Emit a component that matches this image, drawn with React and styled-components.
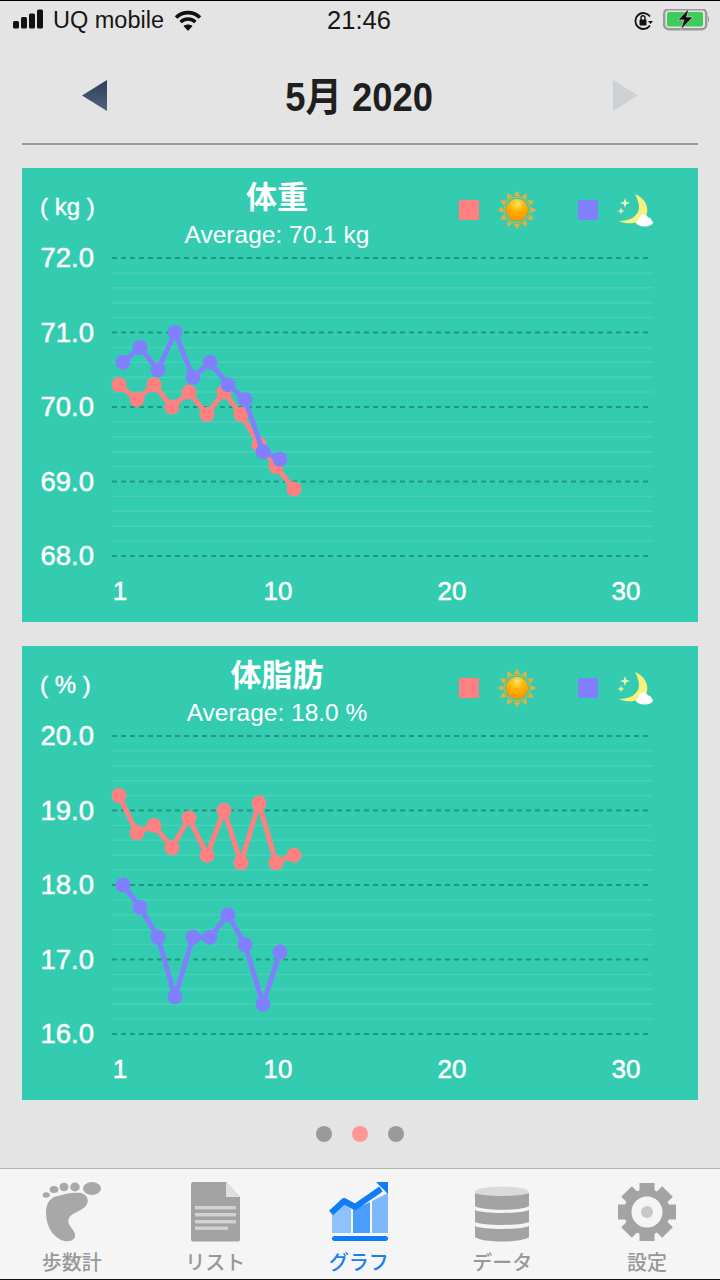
import styled, { createGlobalStyle } from "styled-components";

const GlobalStyle = createGlobalStyle`
  html, body {
    margin: 0;
    padding: 0;
    background: #e4e4e4;
    font-family: "Liberation Sans", "Noto Sans CJK JP", sans-serif;
  }
`;

const Page = styled.div`
  width: 720px;
  height: 1280px;
  display: flex;
  flex-direction: column;
  overflow: hidden;
  background: #e4e4e4;
  border-top: 1px solid #000;
  box-sizing: border-box;
`;

const StatusBar = styled.div`
  height: 39px;
  flex: none;
  display: grid;
  grid-template-columns: 1fr auto 1fr;
  align-items: center;
  padding: 0 10px 0 13px;
  color: #161616;
`;

const StatusLeft = styled.div`
  display: flex;
  align-items: center;
`;

const StatusRight = styled.div`
  display: flex;
  align-items: center;
  justify-content: flex-end;
  gap: 9px;
`;

const Carrier = styled.span`
  font-size: 23.5px;
  margin: 0 10px;
`;

const Clock = styled.span`
  font-size: 25.5px;
  margin-left: -5px;
`;

const MonthNav = styled.div`
  height: 103px;
  flex: none;
  margin: 0 22px;
  padding: 0 60px;
  display: flex;
  align-items: center;
  justify-content: space-between;
  border-bottom: 2px solid #9c9c9c;
`;

const Arrow = styled.div`
  width: 25px;
  height: 31px;
  margin-top: 8px;
  background: ${(p) => (p.$disabled ? "#ced1d4" : "linear-gradient(#2b3f58, #50657c)")};
  clip-path: ${(p) =>
    p.$right ? "polygon(0 0, 100% 50%, 0 100%)" : "polygon(100% 0, 0 50%, 100% 100%)"};
`;

const MonthTitle = styled.div`
  font-size: 40px;
  font-weight: 700;
  color: #1f1f1f;
  margin-top: 4px;
  transform: translateX(-1px) scaleX(0.91);
  white-space: nowrap;
`;

const Cards = styled.main`
  flex: 1;
  display: flex;
  flex-direction: column;
  gap: 24px;
  padding: 23px 22px 0;
`;

const Card = styled.section`
  height: 454px;
  background: #33ccb0;
  color: #fff;
  display: flex;
  flex-direction: column;
`;

const CardHeader = styled.header`
  height: 70px;
  flex: none;
  display: grid;
  grid-template-columns: 90px 330px 1fr;
`;

const Unit = styled.div`
  font-size: 24px;
  line-height: 26px;
  padding: 26px 0 0 18px;
  white-space: pre;
  -webkit-text-stroke: 0.4px #fff;
`;

const TitleBlock = styled.div`
  display: flex;
  flex-direction: column;
  align-items: center;
`;

const CardTitle = styled.div`
  font-size: 31px;
  line-height: 38px;
  margin-top: 8px;
  font-weight: 700;
  font-family: "Noto Sans CJK JP", sans-serif;
`;

const Average = styled.div`
  font-size: 24.5px;
  line-height: 26px;
  margin-top: 8px;
`;

const Legend = styled.div`
  display: flex;
  align-items: center;
  height: 38px;
  margin-top: 23px;
  padding-left: 17px;
`;

const Swatch = styled.span`
  width: 20px;
  height: 20px;
  flex: none;
  background: ${(p) => p.$color};
  margin-left: ${(p) => p.$before}px;
  margin-right: ${(p) => p.$after}px;
`;

const Plot = styled.svg`
  display: block;
  flex: none;
  font-family: "Liberation Sans", sans-serif;
  font-size: 26px;
  fill: #fff;
`;

const AxisLabel = styled.text`
  font-size: ${(p) => p.$size}px;
  stroke: #fff;
  stroke-width: 0.5px;
`;

const Pager = styled.div`
  height: 68px;
  flex: none;
  display: flex;
  align-items: center;
  justify-content: center;
  gap: 20px;
`;

const Dot = styled.span`
  width: 16px;
  height: 16px;
  border-radius: 50%;
  background: ${(p) => (p.$active ? "#ff9696" : "#9a9a9a")};
`;

const TabBar = styled.nav`
  height: 110px;
  flex: none;
  display: grid;
  grid-template-columns: repeat(4, 143.5px) 1fr;
  background: #f5f5f5;
  border-top: 1px solid #b4b4b4;
  border-bottom: 2px solid #111;
  box-sizing: content-box;
`;

const Tab = styled.div`
  display: flex;
  flex-direction: column;
  align-items: center;
  padding-top: 13px;
  color: ${(p) => (p.$active ? "#1a7df0" : "#989898")};
`;

const TabIcon = styled.svg`
  display: block;
  width: 60px;
  height: 60px;
`;

const TabLabel = styled.span`
  font-family: "Noto Sans CJK JP", sans-serif;
  font-size: 20px;
  font-weight: 500;
  line-height: 26px;
  margin-top: 7px;
`;

const pink = "#ff8080";
const blue = "#8080ff";
const pinkX = [119, 137, 154, 172, 189, 207, 224, 241, 259, 276, 294];
const blueX = [123, 140, 158, 175, 193, 210, 228, 245, 263, 280];

const Series = ({ xs, values, max, color }) => {
  const pts = values.map((v, i) => [xs[i] - 22, 20 + (max - v) * 74.5]);
  return (
    <g>
      <polyline
        points={pts.map((p) => p.join(",")).join(" ")}
        fill="none"
        stroke={color}
        strokeWidth="5"
        strokeLinejoin="round"
      />
      {pts.map((p, i) => (
        <circle key={i} cx={p[0]} cy={p[1]} r="7.5" fill={color} />
      ))}
    </g>
  );
};

const Chart = ({ max, day, night }) => {
  const majors = [0, 1, 2, 3, 4];
  const minors = [];
  majors.slice(0, 4).forEach((m) => {
    [1, 2, 3, 4].forEach((n) => minors.push(20 + m * 74.5 + n * 14.9));
  });
  return (
    <Plot width="676" height="384" viewBox="0 0 676 384">
      {minors.map((y) => (
        <line key={y} x1="90" x2="631" y1={y} y2={y} stroke="rgba(255,255,255,0.1)" strokeWidth="1.5" />
      ))}
      {majors.map((m) => {
        const y = 20 + m * 74.5;
        return (
          <g key={m}>
            <line x1="90" x2="628" y1={y} y2={y} stroke="#1e9a7a" strokeWidth="2" strokeDasharray="5 4" />
            <AxisLabel $size={27.5} x="72" y={y + 9} textAnchor="end">
              {(max - m).toFixed(1)}
            </AxisLabel>
          </g>
        );
      })}
      <AxisLabel $size={26} x="98" y="362" textAnchor="middle">1</AxisLabel>
      <AxisLabel $size={26} x="256" y="362" textAnchor="middle">10</AxisLabel>
      <AxisLabel $size={26} x="430" y="362" textAnchor="middle">20</AxisLabel>
      <AxisLabel $size={26} x="604" y="362" textAnchor="middle">30</AxisLabel>
      <Series xs={pinkX} values={day} max={max} color={pink} />
      <Series xs={blueX} values={night} max={max} color={blue} />
    </Plot>
  );
};

const SunIcon = () => (
  <svg width="40" height="40" viewBox="0 0 40 40">
    <defs>
      <radialGradient id="sunBall" cx="50%" cy="22%" r="85%">
        <stop offset="0%" stopColor="#ffe56a" />
        <stop offset="40%" stopColor="#ffb400" />
        <stop offset="100%" stopColor="#ff8a00" />
      </radialGradient>
    </defs>
    {[...Array(12).keys()].map((i) => (
      <polygon
        key={i}
        points="17,6 23,6 20,0.5"
        fill="#e8b13a"
        transform={`rotate(${i * 30} 20 20)`}
      />
    ))}
    <circle cx="20" cy="20" r="13" fill="none" stroke="#e8b13a" strokeWidth="1" />
    <circle cx="20" cy="20" r="11" fill="url(#sunBall)" />
  </svg>
);

const MoonIcon = () => (
  <svg width="38" height="36" viewBox="0 0 38 36">
    <path d="M18 2C28 6 33 16 29 24C25 32 10 33 2 29C12 29 21 25 22 16C22 10 20 6 18 2Z" fill="#f6f27c" />
    <path d="M8 6L9.2 9.8L13 11L9.2 12.2L8 16L6.8 12.2L3 11L6.8 9.8Z" fill="#f4f4b0" />
    <path d="M4 15.5L4.9 18.1L7.5 19L4.9 19.9L4 22.5L3.1 19.9L0.5 19L3.1 18.1Z" fill="#f4f4b0" />
    <ellipse cx="27.500" cy="30.500" rx="8.500" ry="4" fill="#fff" />
    <circle cx="26.500" cy="27.500" r="5" fill="#fff" />
    <circle cx="31" cy="29" r="3.400" fill="#fff" />
  </svg>
);

const ChartCard = ({ title, unit, average, max, day, night }) => (
  <Card>
    <CardHeader>
      <Unit>{`( ${unit} )`}</Unit>
      <TitleBlock>
        <CardTitle>{title}</CardTitle>
        <Average>{average}</Average>
      </TitleBlock>
      <Legend>
        <Swatch $color={pink} $before={0} $after={18} />
        <SunIcon />
        <Swatch $color={blue} $before={41} $after={19} />
        <MoonIcon />
      </Legend>
    </CardHeader>
    <Chart max={max} day={day} night={night} />
  </Card>
);

const FootIcon = () => (
  <TabIcon viewBox="0 0 60 60" fill="#a8a8a8">
    <ellipse cx="50" cy="6.5" rx="9" ry="6.5" />
    <ellipse cx="33" cy="5" rx="4.8" ry="4.4" />
    <ellipse cx="22" cy="5" rx="4.5" ry="4.2" />
    <ellipse cx="12" cy="7.5" rx="4.4" ry="3.6" />
    <ellipse cx="4.2" cy="13" rx="3.6" ry="2.8" />
    <path d="M4 31C4 20 9 15 16 14C24 11 33 10 39 11C45 13 47 17 45 22C43 27 36 29 31 32C26 35 25 39 28 44C31 48 34 51 33 55C31 60 24 60 19 58C9 53 4 42 4 31Z" />
  </TabIcon>
);

const DocIcon = () => (
  <TabIcon viewBox="0 0 60 60">
    <path d="M6 2C6 1 7 0 8 0H41L55 15V57C55 59 54 59.500 53 59.500H8C7 59.500 6 59 6 57Z" fill="#a3a3a3" />
    <path d="M41 0L55 15H41Z" fill="#e0e0e0" />
    <rect x="10" y="24" width="41" height="3.400" fill="#d2d2d2" />
    <rect x="10" y="31" width="41" height="3.400" fill="#d2d2d2" />
    <rect x="10" y="38" width="41" height="3.400" fill="#d2d2d2" />
    <rect x="10" y="44.500" width="33" height="3.400" fill="#d2d2d2" />
  </TabIcon>
);

const GraphIcon = () => (
  <TabIcon viewBox="0 0 60 60">
    <path d="M3 33L15 22L22 27V51H3Z" fill="#8fc2fb" />
    <path d="M24 28L41 20V51H24Z" fill="#4b9dfb" />
    <path d="M43 19L59 11V51H43Z" fill="#7fb7fb" />
    <path d="M2 31L15 19L26 25L52 7" fill="none" stroke="#107cf5" strokeWidth="6" strokeLinejoin="round" />
    <path d="M47 0H59V12Z" fill="#107cf5" />
    <rect x="3" y="54" width="56" height="5" rx="2.500" fill="#107cf5" />
  </TabIcon>
);

const DbIcon = () => (
  <TabIcon viewBox="0 0 60 60" fill="#a3a3a3">
    <ellipse cx="30" cy="10" rx="27" ry="5.500" fill="#dadada" />
    <path d="M3 11C10 15 50 15 57 11V24C50 29 10 29 3 24Z" />
    <path d="M3 28C10 32 50 32 57 28V40C50 44 10 44 3 40Z" />
    <path d="M3 44C10 48 50 48 57 44V55C50 61 10 61 3 55Z" />
  </TabIcon>
);

const GearIcon = () => (
  <TabIcon viewBox="0 0 60 60">
    {[0, 45, 90, 135].map((a) => (
      <rect key={a} x="22.500" y="1" width="15" height="58" fill="#a3a3a3" transform={`rotate(${a} 30 30)`} />
    ))}
    <circle cx="30" cy="30" r="23" fill="#a3a3a3" />
    <circle cx="30" cy="30" r="15.500" fill="#f5f5f5" />
    <circle cx="30" cy="30" r="6" fill="#c8c8c8" />
  </TabIcon>
);

const tabs = [
  { label: "歩数計", icon: <FootIcon /> },
  { label: "リスト", icon: <DocIcon /> },
  { label: "グラフ", icon: <GraphIcon />, active: true },
  { label: "データ", icon: <DbIcon /> },
  { label: "設定", icon: <GearIcon /> },
];

export default function App() {
  return (
    <Page>
      <GlobalStyle />
      <StatusBar>
        <StatusLeft>
          <svg width="30" height="24" viewBox="0 0 30 24" fill="#111">
            <rect x="0" y="12" width="6" height="7.600" rx="1.500" />
            <rect x="8" y="8" width="6" height="11.600" rx="1.500" />
            <rect x="16" y="4.600" width="6" height="15" rx="1.500" />
            <rect x="24" y="0.600" width="6" height="19" rx="1.500" />
          </svg>
          <Carrier>UQ mobile</Carrier>
          <svg width="28" height="22" viewBox="0 0 28 22" fill="none" stroke="#111">
            <path d="M2 7.500C9 1 19 1 26 7.500" strokeWidth="3.600" />
            <path d="M6.500 12C11 8 17 8 21.500 12" strokeWidth="3.400" />
            <path d="M14 21L9.500 16C12 14 16 14 18.500 16Z" fill="#111" stroke="none" />
          </svg>
        </StatusLeft>
        <Clock>21:46</Clock>
        <StatusRight>
          <svg width="21" height="20" viewBox="0 0 21 20" fill="none">
            <path d="M17 14.500A8 8 0 1 1 17 5.500" stroke="#111" strokeWidth="1.800" />
            <path d="M15 10H20L17.500 13Z" fill="#111" />
            <rect x="6.500" y="8.500" width="7" height="6" rx="1" fill="#111" />
            <path d="M8 9V6.800A2 2 0 0 1 12 6.800V9" stroke="#111" strokeWidth="1.400" />
          </svg>
          <svg width="47" height="24" viewBox="0 0 47 24" fill="none">
            <rect x="1.200" y="0.200" width="42" height="20" rx="4.500" stroke="#9a9a9a" strokeWidth="2.400" />
            <rect x="4" y="3" width="36" height="14.500" rx="2" fill="#3ecb5a" />
            <path d="M45 7V13.500C46.500 13 46.500 7.500 45 7Z" fill="#9a9a9a" />
            <path d="M26 -0.500L15 11H21L17.500 21L30 8H23.500Z" fill="#111" stroke="#e4e4e4" strokeWidth="0.600" />
          </svg>
        </StatusRight>
      </StatusBar>

      <MonthNav>
        <Arrow />
        <MonthTitle>5月 2020</MonthTitle>
        <Arrow $right $disabled />
      </MonthNav>

      <Cards>
        <ChartCard
          title="体重"
          unit="kg"
          average="Average: 70.1 kg"
          max={72}
          day={[70.3, 70.1, 70.3, 70.0, 70.2, 69.9, 70.2, 69.9, 69.5, 69.2, 68.9]}
          night={[70.6, 70.8, 70.5, 71.0, 70.4, 70.6, 70.3, 70.1, 69.4, 69.3]}
        />
        <ChartCard
          title="体脂肪"
          unit="%"
          average="Average: 18.0 %"
          max={20}
          day={[19.2, 18.7, 18.8, 18.5, 18.9, 18.4, 19.0, 18.3, 19.1, 18.3, 18.4]}
          night={[18.0, 17.7, 17.3, 16.5, 17.3, 17.3, 17.6, 17.2, 16.4, 17.1]}
        />
      </Cards>

      <Pager>
        <Dot />
        <Dot $active />
        <Dot />
      </Pager>

      <TabBar>
        {tabs.map((t) => (
          <Tab key={t.label} $active={t.active}>
            {t.icon}
            <TabLabel>{t.label}</TabLabel>
          </Tab>
        ))}
      </TabBar>
    </Page>
  );
}
